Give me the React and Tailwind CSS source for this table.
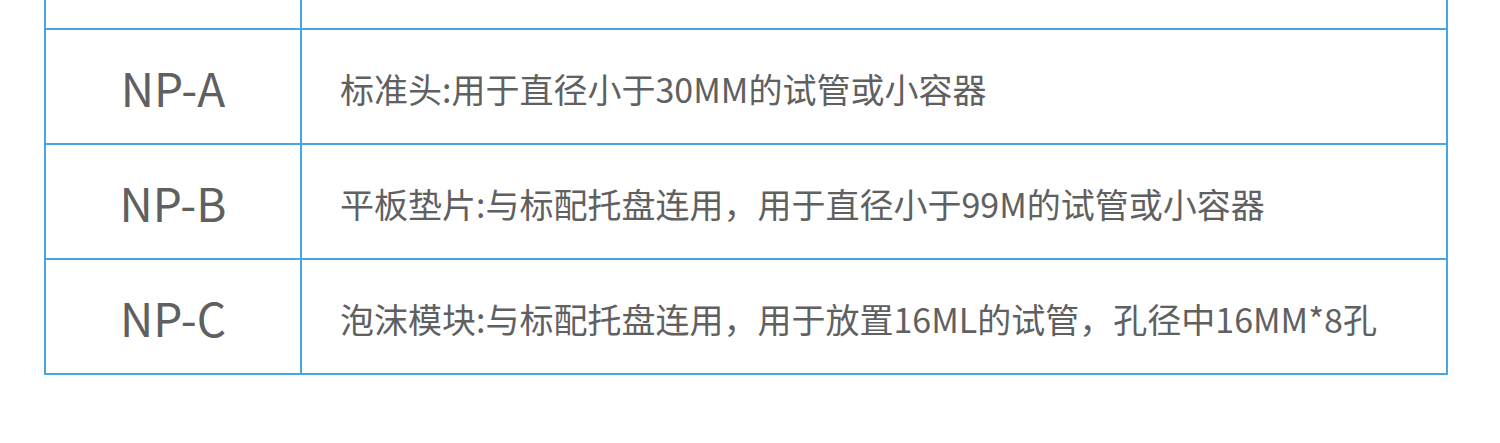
export default function App() {
  const rows = [
    ["NP-A", "标准头:用于直径小于30MM的试管或小容器"],
    ["NP-B", "平板垫片:与标配托盘连用，用于直径小于99M的试管或小容器"],
    ["NP-C", "泡沫模块:与标配托盘连用，用于放置16ML的试管，孔径中16MM*8孔"],
  ];
  return (
    <div
      className="w-[1500px] h-[443px] bg-white overflow-hidden"
      style={{ fontFamily: '"Noto Sans CJK SC", "Noto Sans", sans-serif' }}
    >
      <div className="ml-[44px] w-[1404px] border-x-2 border-b-2 border-[#46a5e5]">
        <div className="flex h-[28px]">
          <div className="w-[256px] border-r-2 border-[#46a5e5]" />
          <div className="flex-1" />
        </div>
        {rows.map(([code, desc]) => (
          <div key={code} className="flex h-[115px] border-t-2 border-[#46a5e5]">
            <div className="w-[256px] border-r-2 border-[#46a5e5] flex items-center justify-center text-[46px] font-normal text-[#606060] leading-none">
              {code}
            </div>
            <div className="flex-1 flex items-center pl-[38px] pt-[4px] text-[34px] font-normal text-[#606060] leading-none">
              {desc}
            </div>
          </div>
        ))}
      </div>
    </div>
  );
}
